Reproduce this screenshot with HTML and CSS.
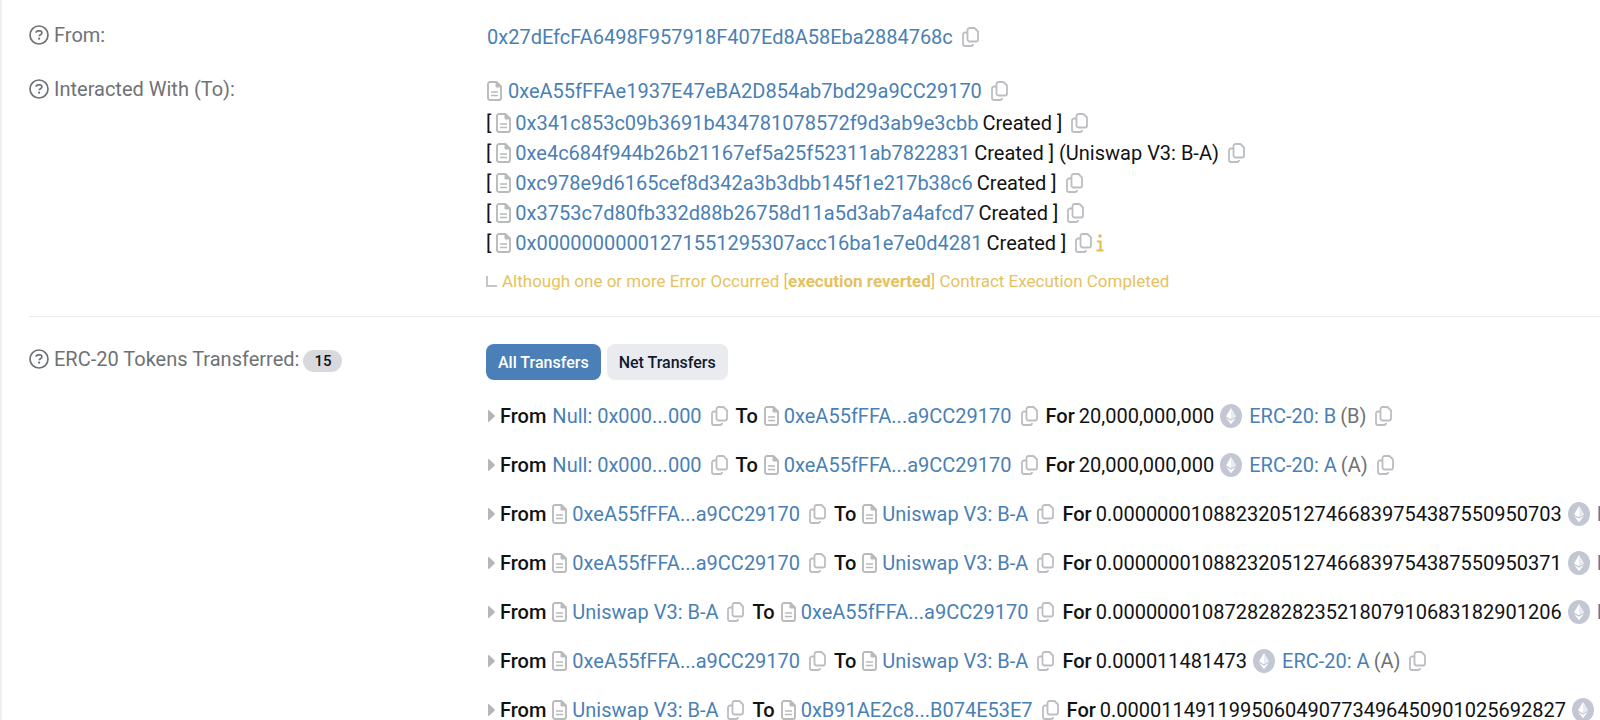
FILE: index.html
```html
<!doctype html>
<html lang="en">
	<head>
		<meta charset="utf-8">
		<meta name="viewport" content="width=device-width, initial-scale=1">
		<title>Transaction Details</title>
		<link rel="stylesheet" href="styles.css">
	</head>
	<body>
		<!-- icons shared by all the rows -->
		<svg class="sprite" aria-hidden="true">
			<symbol id="help" viewBox="0 0 20 20">
				<circle cx="10" cy="10" r="9" fill="none" stroke="currentColor" stroke-width="1.7"/>
				<path d="M7.2 7.8c0-1.3 1-2 2.2-2h1.2c1.3 0 2.3.9 2.3 2.1 0 1.7-2.7 1.9-2.7 3.3" fill="none" stroke="currentColor" stroke-width="1.7"/>
				<circle cx="10.1" cy="13.7" r="1.1" fill="currentColor"/>
			</symbol>
			<symbol id="copy" viewBox="0 0 17 20">
				<path d="M7.5 1H12.500l3.500 3.500v8a2 2 0 0 1-2 2H7.500a2 2 0 0 1-2-2V3a2 2 0 0 1 2-2z" fill="none" stroke="currentColor" stroke-width="1.8" stroke-linejoin="round"/>
				<path d="M5.500 5.500H3a2 2 0 0 0-2 2V17a2 2 0 0 0 2 2h6a2 2 0 0 0 2-2" fill="none" stroke="currentColor" stroke-width="1.8"/>
			</symbol>
			<symbol id="file" viewBox="0 0 15 20">
				<path d="M3 1h6.5L14 5.500V17a2 2 0 0 1-2 2H3a2 2 0 0 1-2-2V3a2 2 0 0 1 2-2z" fill="none" stroke="currentColor" stroke-width="1.9" stroke-linejoin="round"/>
				<path d="M9 1v5h5z" fill="currentColor" stroke="currentColor"/>
				<path d="M4 11h7M4 14.500h7" stroke="currentColor" stroke-width="1.6"/>
			</symbol>
			<symbol id="eth" viewBox="0 0 22 24">
				<ellipse cx="11" cy="12" rx="11" ry="12" fill="#c2c7d3"/>
				<path d="M11 4l5 8.500-5 2.800-5-2.800z" fill="#fff"/>
				<path d="M11 4v11.300l5-2.800z" fill="#e8eaf0"/>
				<path d="M6.200 14l4.800 2.700 4.800-2.700-4.800 6.200z" fill="#fff"/>
			</symbol>
			<symbol id="caret" viewBox="0 0 7 12">
				<path d="M0 .8v10.400c0 .7.700 1 1.200.5l5.300-4.900c.5-.5.5-1.100 0-1.600L1.200.3C.7-.2 0 .1 0 .8z" fill="currentColor"/>
			</symbol>
			<symbol id="info" viewBox="0 0 8 18">
				<circle cx="4" cy="2" r="1.800" fill="currentColor"/>
				<path d="M1 7.500h3.500V16M.5 16.500h7" fill="none" stroke="currentColor" stroke-width="2.200"/>
			</symbol>
		</svg>

		<main class="details">
			<section class="row">
				<div class="label"><svg class="help"><use href="#help"/></svg>From:</div>
				<div class="value">
					<div class="line main-address">
						<a href="#">0x27dEfcFA6498F957918F407Ed8A58Eba2884768c</a>
						<button class="copy" aria-label="Copy"><svg><use href="#copy"/></svg></button>
					</div>
				</div>
			</section>

			<section class="row row-to">
				<div class="label"><svg class="help"><use href="#help"/></svg>Interacted With (To):</div>
				<div class="value">
					<div class="line main-address">
						<svg class="file"><use href="#file"/></svg><a href="#">0xeA55fFFAe1937E47eBA2D854ab7bd29a9CC29170</a>
						<button class="copy" aria-label="Copy"><svg><use href="#copy"/></svg></button>
					</div>
					<div class="line created">
						<span>[</span><svg class="file"><use href="#file"/></svg><a href="#">0x341c853c09b3691b434781078572f9d3ab9e3cbb</a><span class="note">Created ]</span>
						<button class="copy" aria-label="Copy"><svg><use href="#copy"/></svg></button>
					</div>
					<div class="line created">
						<span>[</span><svg class="file"><use href="#file"/></svg><a href="#">0xe4c684f944b26b21167ef5a25f52311ab7822831</a><span class="note">Created ] (Uniswap V3: B-A)</span>
						<button class="copy" aria-label="Copy"><svg><use href="#copy"/></svg></button>
					</div>
					<div class="line created">
						<span>[</span><svg class="file"><use href="#file"/></svg><a href="#">0xc978e9d6165cef8d342a3b3dbb145f1e217b38c6</a><span class="note">Created ]</span>
						<button class="copy" aria-label="Copy"><svg><use href="#copy"/></svg></button>
					</div>
					<div class="line created">
						<span>[</span><svg class="file"><use href="#file"/></svg><a href="#">0x3753c7d80fb332d88b26758d11a5d3ab7a4afcd7</a><span class="note">Created ]</span>
						<button class="copy" aria-label="Copy"><svg><use href="#copy"/></svg></button>
					</div>
					<div class="line created">
						<span>[</span><svg class="file"><use href="#file"/></svg><a href="#">0x00000000001271551295307acc16ba1e7e0d4281</a><span class="note">Created ]</span>
						<button class="copy" aria-label="Copy"><svg><use href="#copy"/></svg></button>
						<svg class="info"><use href="#info"/></svg>
					</div>
					<p class="warning"><span class="elbow"></span><span>Although one or more Error Occurred [<b>execution reverted</b>] Contract Execution Completed</span></p>
				</div>
			</section>

			<hr>

			<section class="row row-tokens">
				<div class="label"><svg class="help"><use href="#help"/></svg>ERC-20 Tokens Transferred: <span class="badge">15</span></div>
				<div class="value">
					<div class="tabs">
						<button class="tab active">All Transfers</button>
						<button class="tab">Net Transfers</button>
					</div>
					<ul class="transfers">
						<li class="line">
							<svg class="caret"><use href="#caret"/></svg><b>From</b>
							<a class="plain" href="#">Null: 0x000...000</a><button class="copy" aria-label="Copy"><svg><use href="#copy"/></svg></button>
							<b class="to">To</b>
							<svg class="file"><use href="#file"/></svg><a href="#">0xeA55fFFA...a9CC29170</a><button class="copy" aria-label="Copy"><svg><use href="#copy"/></svg></button>
							<b class="for">For</b><span class="amount">20,000,000,000</span>
							<svg class="eth"><use href="#eth"/></svg><a href="#">ERC-20: B</a><span class="symbol">(B)</span><button class="copy" aria-label="Copy"><svg><use href="#copy"/></svg></button>
						</li>
						<li class="line">
							<svg class="caret"><use href="#caret"/></svg><b>From</b>
							<a class="plain" href="#">Null: 0x000...000</a><button class="copy" aria-label="Copy"><svg><use href="#copy"/></svg></button>
							<b class="to">To</b>
							<svg class="file"><use href="#file"/></svg><a href="#">0xeA55fFFA...a9CC29170</a><button class="copy" aria-label="Copy"><svg><use href="#copy"/></svg></button>
							<b class="for">For</b><span class="amount">20,000,000,000</span>
							<svg class="eth"><use href="#eth"/></svg><a href="#">ERC-20: A</a><span class="symbol">(A)</span><button class="copy" aria-label="Copy"><svg><use href="#copy"/></svg></button>
						</li>
						<li class="line">
							<svg class="caret"><use href="#caret"/></svg><b>From</b>
							<svg class="file"><use href="#file"/></svg><a href="#">0xeA55fFFA...a9CC29170</a><button class="copy" aria-label="Copy"><svg><use href="#copy"/></svg></button>
							<b class="to">To</b>
							<svg class="file"><use href="#file"/></svg><a href="#">Uniswap V3: B-A</a><button class="copy" aria-label="Copy"><svg><use href="#copy"/></svg></button>
							<b class="for">For</b><span class="amount">0.0000000108823205127466839754387550950703</span>
							<svg class="eth"><use href="#eth"/></svg><a href="#">ERC-20: B</a>
						</li>
						<li class="line">
							<svg class="caret"><use href="#caret"/></svg><b>From</b>
							<svg class="file"><use href="#file"/></svg><a href="#">0xeA55fFFA...a9CC29170</a><button class="copy" aria-label="Copy"><svg><use href="#copy"/></svg></button>
							<b class="to">To</b>
							<svg class="file"><use href="#file"/></svg><a href="#">Uniswap V3: B-A</a><button class="copy" aria-label="Copy"><svg><use href="#copy"/></svg></button>
							<b class="for">For</b><span class="amount">0.0000000108823205127466839754387550950371</span>
							<svg class="eth"><use href="#eth"/></svg><a href="#">ERC-20: A</a>
						</li>
						<li class="line">
							<svg class="caret"><use href="#caret"/></svg><b>From</b>
							<svg class="file"><use href="#file"/></svg><a href="#">Uniswap V3: B-A</a><button class="copy" aria-label="Copy"><svg><use href="#copy"/></svg></button>
							<b class="to">To</b>
							<svg class="file"><use href="#file"/></svg><a href="#">0xeA55fFFA...a9CC29170</a><button class="copy" aria-label="Copy"><svg><use href="#copy"/></svg></button>
							<b class="for">For</b><span class="amount">0.0000000108728282823521807910683182901206</span>
							<svg class="eth"><use href="#eth"/></svg><a href="#">ERC-20: B</a>
						</li>
						<li class="line">
							<svg class="caret"><use href="#caret"/></svg><b>From</b>
							<svg class="file"><use href="#file"/></svg><a href="#">0xeA55fFFA...a9CC29170</a><button class="copy" aria-label="Copy"><svg><use href="#copy"/></svg></button>
							<b class="to">To</b>
							<svg class="file"><use href="#file"/></svg><a href="#">Uniswap V3: B-A</a><button class="copy" aria-label="Copy"><svg><use href="#copy"/></svg></button>
							<b class="for">For</b><span class="amount">0.000011481473</span>
							<svg class="eth"><use href="#eth"/></svg><a href="#">ERC-20: A</a><span class="symbol">(A)</span><button class="copy" aria-label="Copy"><svg><use href="#copy"/></svg></button>
						</li>
						<li class="line">
							<svg class="caret"><use href="#caret"/></svg><b>From</b>
							<svg class="file"><use href="#file"/></svg><a href="#">Uniswap V3: B-A</a><button class="copy" aria-label="Copy"><svg><use href="#copy"/></svg></button>
							<b class="to">To</b>
							<svg class="file"><use href="#file"/></svg><a href="#">0xB91AE2c8...B074E53E7</a><button class="copy" aria-label="Copy"><svg><use href="#copy"/></svg></button>
							<b class="for">For</b><span class="amount">0.0000114911995060490773496450901025692827</span>
							<svg class="eth"><use href="#eth"/></svg>
						</li>
					</ul>
				</div>
			</section>
		</main>
	</body>
</html>
```

FILE: styles.css
```css
body {
	margin: 0;
	background: #fff;
	color: #111214;
	font-family: Roboto, "Liberation Sans", sans-serif;
	font-size: 20px;
	line-height: 30px;
	overflow-x: hidden;
}
/* the page scrolls without a visible bar */
html { scrollbar-width: none; }

.sprite {
	position: absolute;
	width: 0;
	height: 0;
}

.details {
	min-height: 100vh;
	box-sizing: border-box;
	padding: 20px 0 0 27px;
	border-left: 2px solid #f0f0f1;
}

.row {
	display: grid;
	grid-template-columns: 457px 1fr;
	align-items: start;
}
.row-to { margin-top: 20px; }
.value { min-width: 0; }

.label {
	display: flex;
	align-items: center;
	color: #6f7275;
}
.help {
	width: 20px;
	height: 20px;
	margin-right: 5px;
}

.line {
	display: flex;
	align-items: center;
	white-space: nowrap;
}
.line > * { flex: none; }
.main-address { padding: 2px 0 2px 1px; }

a {
	color: #4a7fb5;
	text-decoration: none;
}
b { font-weight: 500; }

.copy {
	display: flex;
	margin: 0 0 0 9px;
	padding: 0;
	border: 0;
	background: none;
	color: #bcbec2;
	cursor: pointer;
}
.copy svg {
	width: 17px;
	height: 20px;
}
.file {
	width: 15px;
	height: 20px;
	margin-right: 6px;
	color: #b9babc;
}
.created .file { margin: 0 4px 0 5px; }
.note { margin-left: 4px; }
.info {
	width: 8px;
	height: 18px;
	margin-left: 4px;
	color: #e6bd4b;
}

.warning {
	display: flex;
	align-items: center;
	margin: 8px 0 0;
	color: #e5c25f;
	font-size: 17px;
}
.warning b { font-weight: 700; }
.elbow {
	width: 9px;
	height: 9px;
	margin: 0 5px 0 0;
	border: solid #c4c6ca;
	border-width: 0 0 2px 2px;
}

hr {
	margin: 20px 0 27px;
	border: 0;
	border-top: 1px solid #ececee;
}

.badge {
	margin: 4px 0 0 4px;
	padding: 0 11px;
	border-radius: 11px;
	background: #d7d9dc;
	color: #111;
	font-size: 15px;
	font-weight: 500;
	line-height: 22px;
}

.tabs {
	display: flex;
	gap: 6px;
}
.tab {
	height: 36px;
	padding: 0 12px;
	border: 0;
	border-radius: 8px;
	background: #e9ebef;
	color: #101a30;
	font-family: inherit;
	font-size: 16px;
	font-weight: 500;
}
.tab.active {
	background: #4a7fb8;
	color: #fff;
}

.transfers {
	display: grid;
	gap: 19px;
	margin: 21px 0 0;
	padding: 0;
	list-style: none;
}
.caret {
	width: 7px;
	height: 12px;
	margin: 0 5px 0 2px;
	color: #b3b6bb;
}
.transfers .file { margin: 0 5px 0 6px; }
.plain { margin-left: 6px; }
.to,
.for { margin-left: 8px; }
.amount { margin-left: 4px; }
.eth {
	width: 22px;
	height: 24px;
	margin: 0 7px 0 6px;
}
.symbol {
	margin-left: 4px;
	color: #6f7275;
}
```
